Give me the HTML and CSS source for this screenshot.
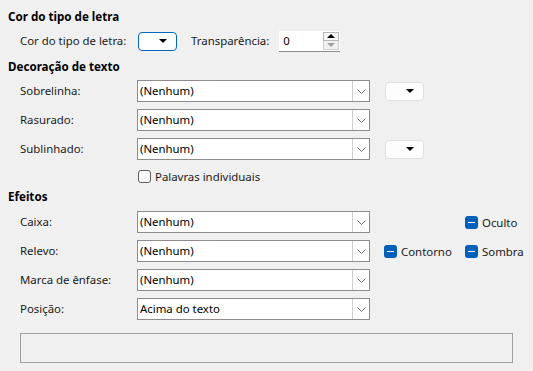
FILE: index.html
```html
<!DOCTYPE html>
<html lang="pt">
<head>
    <meta charset="UTF-8">
    <title>Efeitos do tipo de letra</title>
    <link rel="stylesheet" href="styles.css">
</head>
<body>
    <div class="page">
        <h2 class="section-title">Cor do tipo de letra</h2>
        <div class="color-row">
            <span class="label">Cor do tipo de letra:</span>
            <button class="color-btn active"><span class="tri"></span></button>
            <span class="label trans-label">Transparência:</span>
            <div class="spin">
                <span class="spin-value">0</span>
                <div class="spin-btns">
                    <span class="spin-up"><span class="tri up"></span></span>
                    <span class="spin-down"><span class="tri down"></span></span>
                </div>
            </div>
        </div>

        <h2 class="section-title">Decoração de texto</h2>
        <div class="form-grid deco">
            <span class="label">Sobrelinha:</span>
            <div class="combo"><span class="combo-text">(Nenhum)</span><span class="combo-arrow"><svg width="9" height="5" viewBox="0 0 9 5"><polyline points="0.5,0.5 4.5,4.5 8.5,0.5" fill="none" stroke="#6b6b6b" stroke-width="1"/></svg></span></div>
            <button class="color-btn"><span class="tri"></span></button>

            <span class="label">Rasurado:</span>
            <div class="combo"><span class="combo-text">(Nenhum)</span><span class="combo-arrow"><svg width="9" height="5" viewBox="0 0 9 5"><polyline points="0.5,0.5 4.5,4.5 8.5,0.5" fill="none" stroke="#6b6b6b" stroke-width="1"/></svg></span></div>
            <span></span>

            <span class="label">Sublinhado:</span>
            <div class="combo"><span class="combo-text">(Nenhum)</span><span class="combo-arrow"><svg width="9" height="5" viewBox="0 0 9 5"><polyline points="0.5,0.5 4.5,4.5 8.5,0.5" fill="none" stroke="#6b6b6b" stroke-width="1"/></svg></span></div>
            <button class="color-btn"><span class="tri"></span></button>
        </div>
        <label class="check-row">
            <span class="check"></span>
            <span>Palavras individuais</span>
        </label>

        <h2 class="section-title">Efeitos</h2>
        <div class="form-grid effects">
            <span class="label">Caixa:</span>
            <div class="combo"><span class="combo-text">(Nenhum)</span><span class="combo-arrow"><svg width="9" height="5" viewBox="0 0 9 5"><polyline points="0.5,0.5 4.5,4.5 8.5,0.5" fill="none" stroke="#6b6b6b" stroke-width="1"/></svg></span></div>
            <span></span>
            <label class="tri-check"><span class="check mixed"></span>Oculto</label>

            <span class="label">Relevo:</span>
            <div class="combo"><span class="combo-text">(Nenhum)</span><span class="combo-arrow"><svg width="9" height="5" viewBox="0 0 9 5"><polyline points="0.5,0.5 4.5,4.5 8.5,0.5" fill="none" stroke="#6b6b6b" stroke-width="1"/></svg></span></div>
            <label class="tri-check"><span class="check mixed"></span>Contorno</label>
            <label class="tri-check"><span class="check mixed"></span>Sombra</label>

            <span class="label">Marca de ênfase:</span>
            <div class="combo"><span class="combo-text">(Nenhum)</span><span class="combo-arrow"><svg width="9" height="5" viewBox="0 0 9 5"><polyline points="0.5,0.5 4.5,4.5 8.5,0.5" fill="none" stroke="#6b6b6b" stroke-width="1"/></svg></span></div>
            <span></span>
            <span></span>

            <span class="label">Posição:</span>
            <div class="combo"><span class="combo-text">Acima do texto</span><span class="combo-arrow"><svg width="9" height="5" viewBox="0 0 9 5"><polyline points="0.5,0.5 4.5,4.5 8.5,0.5" fill="none" stroke="#6b6b6b" stroke-width="1"/></svg></span></div>
            <span></span>
            <span></span>
        </div>

        <div class="preview"></div>
    </div>
</body>
</html>
```

FILE: styles.css
```css
body {
    margin: 0;
    background: #f0f0f0;
    font-family: "Noto Sans", "Open Sans", sans-serif;
    font-size: 11.4px;
    color: #1a1a1a;
}

.page {
    padding: 9px 0 0 8px;
}

.section-title {
    margin: 0;
    font-size: 11.6px;
    font-weight: bold;
    line-height: 16px;
    color: #000;
}

.label {
    line-height: 22px;
    white-space: nowrap;
}

/* cor do tipo de letra */
.color-row {
    display: flex;
    align-items: center;
    height: 22px;
    margin: 5px 0 7px 12px;
}

.color-row .label {
    width: 118px;
}

.color-row .trans-label {
    width: auto;
    margin: 0 10px 0 14px;
}

.color-btn {
    box-sizing: border-box;
    width: 39px;
    height: 19px;
    padding: 0;
    background: #fdfdfd;
    border: 1px solid #e0e0e0;
    border-radius: 4px;
    display: flex;
    align-items: center;
    justify-content: flex-end;
    padding-right: 9px;
}

.color-btn.active {
    border-color: #0067c0;
    background: #fff;
}

.tri {
    width: 0;
    height: 0;
    border-left: 4px solid transparent;
    border-right: 4px solid transparent;
    border-top: 4px solid #000;
}

.tri.up {
    border-top: none;
    border-bottom: 4px solid #000;
}

.tri.down {
    border-top-color: #a0a0a0;
}

.spin {
    box-sizing: border-box;
    width: 61px;
    height: 21px;
    background: #fff;
    border-bottom: 1px solid #8a8a8a;
    display: flex;
    align-items: center;
    justify-content: space-between;
}

.spin-value {
    padding-left: 4px;
    color: #000;
}

.spin-btns {
    display: flex;
    flex-direction: column;
    margin-right: 1px;
}

.spin-up,
.spin-down {
    box-sizing: border-box;
    width: 16px;
    height: 9px;
    border: 1px solid #b8b8b8;
    background: #f7f7f7;
    display: flex;
    align-items: center;
    justify-content: center;
}

.spin-down {
    border-top: none;
    background: #f0f0f0;
    border-color: #d0d0d0;
}

/* linhas com caixas de combinação */
.form-grid {
    display: grid;
    grid-auto-rows: 22px;
    row-gap: 7px;
    margin-left: 12px;
    align-items: center;
}

.deco {
    margin-top: 5px;
    grid-template-columns: 117px 233px 53px;
}

.deco .color-btn {
    margin-left: 15px;
}

.combo {
    box-sizing: border-box;
    height: 22px;
    background: #fff;
    border: 1px solid #8c8c8c;
    display: flex;
    align-items: stretch;
}

.combo-text {
    flex: 1;
    padding-left: 2px;
    line-height: 20px;
    color: #000;
}

.combo-arrow {
    width: 16px;
    border-left: 1px solid #cfcfcf;
    display: flex;
    align-items: center;
    justify-content: center;
}

.check-row {
    display: flex;
    align-items: center;
    gap: 4px;
    height: 16px;
    margin: 8px 0 5px 130px;
}

.check {
    box-sizing: border-box;
    width: 13px;
    height: 13px;
    border: 1px solid #5c5c5c;
    border-radius: 3px;
    background: #f7f7f7;
    flex: none;
}

.check.mixed {
    border: none;
    background: #005fb8;
    position: relative;
}

.check.mixed::after {
    content: "";
    position: absolute;
    left: 3px;
    top: 6px;
    width: 7px;
    height: 1.5px;
    background: #fff;
}

.effects {
    margin-top: 6px;
    grid-template-columns: 117px 233px 81px auto;
}

.tri-check {
    display: flex;
    align-items: center;
    gap: 4px;
    white-space: nowrap;
}

.effects > .tri-check {
    margin-left: 14px;
}

.effects > :nth-child(4n) {
    margin-left: 14px;
}

.preview {
    box-sizing: border-box;
    width: 493px;
    height: 30px;
    margin: 13px 0 0 12px;
    border: 1px solid #a0a0a0;
}
```
